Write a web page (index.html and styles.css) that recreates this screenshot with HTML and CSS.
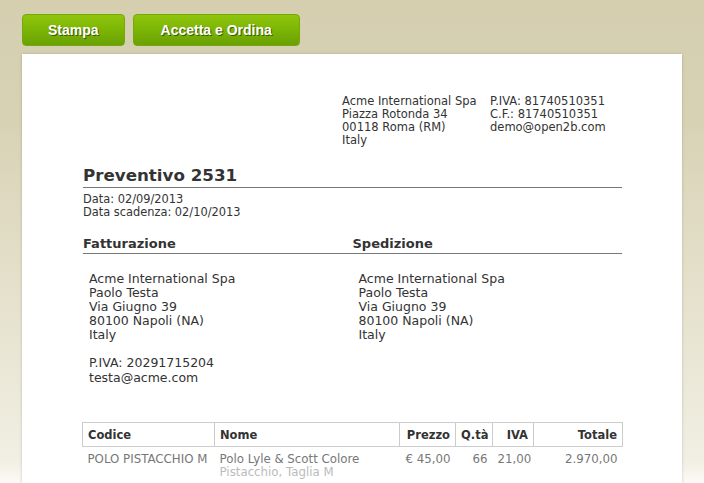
FILE: index.html
```html
<!DOCTYPE html>
<html lang="it">
<head>
  <meta charset="UTF-8" />
  <title>Preventivo 2531</title>
  <link rel="stylesheet" href="styles.css">
</head>
<body>
  <div class="toolbar">
    <button class="btn">Stampa</button>
    <button class="btn btn-wide">Accetta e Ordina</button>
  </div>

  <div class="sheet">
    <div class="company">
      <div class="company-col company-addr">
        Acme International Spa<br>
        Piazza Rotonda 34<br>
        00118 Roma (RM)<br>
        Italy
      </div>
      <div class="company-col">
        P.IVA: 81740510351<br>
        C.F.: 81740510351<br>
        demo@open2b.com
      </div>
    </div>

    <h1 class="title">Preventivo 2531</h1>
    <div class="dates">
      Data: 02/09/2013<br>
      Data scadenza: 02/10/2013
    </div>

    <div class="addresses">
      <div class="addr-col">
        <h2>Fatturazione</h2>
        <div class="addr">
          Acme International Spa<br>
          Paolo Testa<br>
          Via Giugno 39<br>
          80100 Napoli (NA)<br>
          Italy
        </div>
        <div class="addr addr-extra">
          P.IVA: 20291715204<br>
          testa@acme.com
        </div>
      </div>
      <div class="addr-col">
        <h2>Spedizione</h2>
        <div class="addr">
          Acme International Spa<br>
          Paolo Testa<br>
          Via Giugno 39<br>
          80100 Napoli (NA)<br>
          Italy
        </div>
      </div>
    </div>

    <table class="items">
      <colgroup>
        <col class="c-code">
        <col class="c-name">
        <col class="c-price">
        <col class="c-qty">
        <col class="c-vat">
        <col class="c-total">
      </colgroup>
      <thead>
        <tr>
          <th>Codice</th>
          <th>Nome</th>
          <th class="c-num">Prezzo</th>
          <th class="c-num">Q.tà</th>
          <th class="c-num">IVA</th>
          <th class="c-num">Totale</th>
        </tr>
      </thead>
      <tbody>
        <tr>
          <td>POLO PISTACCHIO M</td>
          <td>Polo Lyle &amp; Scott Colore<br><span class="variant">Pistacchio, Taglia M</span></td>
          <td class="c-num">€ 45,00</td>
          <td class="c-num">66</td>
          <td class="c-num">21,00</td>
          <td class="c-num">2.970,00</td>
        </tr>
      </tbody>
    </table>
  </div>
</body>
</html>
```

FILE: styles.css
```css
body {
  margin: 0;
  padding: 14px 22px 0;
  font-family: 'DejaVu Sans', Verdana, sans-serif;
  color: #333;
  background: #fff linear-gradient(to bottom, #d5cfb0 0, #d8d2b5 120px, #f1efe3 460px, #fbfaf6 483px) no-repeat;
  min-height: 100vh;
  box-sizing: border-box;
}

.toolbar {
  display: flex;
  gap: 8px;
}

.btn {
  height: 32px;
  padding: 0 25px;
  border: 1px solid #76a80a;
  border-radius: 4px;
  background: linear-gradient(to bottom, #8fc50c 0%, #7cb505 50%, #6aa103 100%);
  color: #fff;
  font-family: 'Liberation Sans', Arial, sans-serif;
  font-size: 14px;
  font-weight: bold;
  text-shadow: 1px 1px 0 #3d5a00;
  cursor: pointer;
}

.btn-wide {
  padding: 0 27px;
}

.sheet {
  margin-top: 8px;
  background: #fff;
  box-shadow: 0 0 3px rgba(0, 0, 0, 0.18);
  padding: 41px 60px 40px 61px;
  min-height: 500px;
}

.company {
  display: flex;
  margin-left: 259px;
  font-size: 11.5px;
  line-height: 13px;
}

.company-addr {
  width: 148px;
}

.title {
  margin: 18px 0 0;
  font-size: 16.7px;
  line-height: 20px;
  padding-bottom: 2px;
  border-bottom: 1px solid #777;
}

.dates {
  margin-top: 5px;
  font-size: 11.4px;
  line-height: 13px;
}

.addresses {
  display: flex;
  margin-top: 17px;
}

.addr-col {
  flex: 1;
}

.addr-col h2 {
  margin: 0;
  font-size: 13px;
  line-height: 16px;
  padding-bottom: 1px;
  border-bottom: 1px solid #777;
}

.addr {
  padding-left: 6px;
  margin-top: 18px;
  font-size: 12.5px;
  line-height: 14px;
}

.addr-extra {
  margin-top: 13px;
  line-height: 15px;
}

.items {
  width: 540px;
  margin: 37px 0 0 -1px;
  table-layout: fixed;
  border-collapse: collapse;
  font-size: 11.8px;
}

.c-code { width: 132px; }
.c-name { width: 185px; }
.c-price { width: 56px; }
.c-qty { width: 37px; }
.c-vat { width: 41px; }
.c-total { width: 89px; }

.items th {
  border: 1px solid #ccc;
  height: 23px;
  padding: 0 5px;
  text-align: left;
  font-size: 11.5px;
  color: #333;
}

.items td {
  vertical-align: top;
  padding: 6px 5px 0;
  line-height: 13px;
  color: #777;
  white-space: nowrap;
}

.items .c-num {
  text-align: right;
}

.variant {
  color: #bbb;
}
```
